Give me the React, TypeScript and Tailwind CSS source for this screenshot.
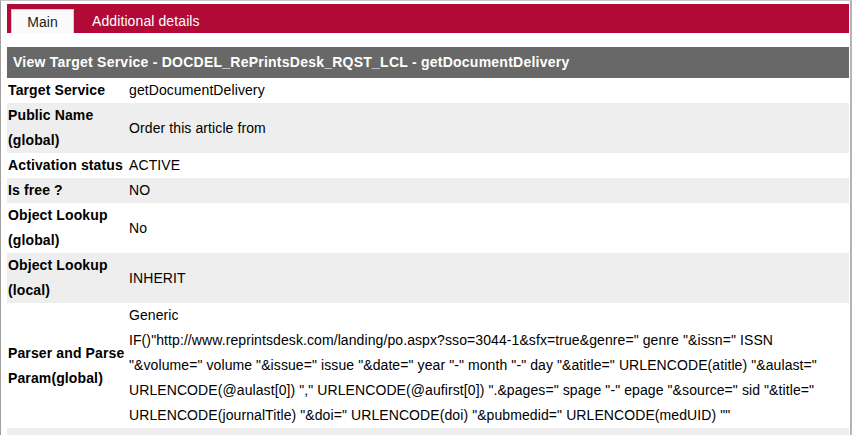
import React from "react";

const rows: { label: string[]; value: React.ReactNode; gray: boolean }[] = [
  { label: ["Target Service"], value: "getDocumentDelivery", gray: false },
  { label: ["Public Name", "(global)"], value: "Order this article from", gray: true },
  { label: ["Activation status"], value: "ACTIVE", gray: false },
  { label: ["Is free ?"], value: "NO", gray: true },
  { label: ["Object Lookup", "(global)"], value: "No", gray: false },
  { label: ["Object Lookup", "(local)"], value: "INHERIT", gray: true },
];

const parserLines = [
  "Generic",
  'IF()"http://www.reprintsdesk.com/landing/po.aspx?sso=3044-1&sfx=true&genre=" genre "&issn=" ISSN',
  '"&volume=" volume "&issue=" issue "&date=" year "-" month "-" day "&atitle=" URLENCODE(atitle) "&aulast="',
  'URLENCODE(@aulast[0]) "," URLENCODE(@aufirst[0]) ".&pages=" spage "-" epage "&source=" sid "&title="',
  'URLENCODE(journalTitle) "&doi=" URLENCODE(doi) "&pubmedid=" URLENCODE(medUID) ""',
];

export default function App() {
  return (
    <div
      className="w-[852px] h-[435px] overflow-hidden bg-white border-t border-l border-r-2 border-t-[#c8c8c8] border-l-[#a0a0a0] border-r-[#b4b4b4] pl-[6px] pr-[1px] pt-[3px] text-black text-[14px]"
      style={{ fontFamily: '"Liberation Sans", Arial, sans-serif' }}
    >
      {/* tab bar */}
      <div className="h-[29px] bg-[#b20a37] flex items-end pl-[4px]">
        <div className="h-[24px] w-[63px] bg-[#fafafa] border border-b-0 border-[#d0d0d0] flex items-center justify-center text-[#222] leading-none tracking-[0.1px]">
          Main
        </div>
        <div className="h-[24px] flex items-center pl-[18px] text-white leading-none tracking-[0.1px]">
          Additional details
        </div>
      </div>

      {/* heading */}
      <div className="mt-[14px] h-[31px] bg-[#686868] text-white font-bold flex items-center pl-[6px] tracking-[0.24px]">
        View Target Service - DOCDEL_RePrintsDesk_RQST_LCL - getDocumentDelivery
      </div>

      {/* rows */}
      <div className="leading-[25px]">
        {rows.map((r, i) => (
          <div key={i} className={`flex items-center ${r.gray ? "bg-[#eeeeee]" : "bg-white"}`}>
            <div className="w-[121px] pl-[1px] font-bold shrink-0 tracking-[0.12px]">
              {r.label.map((l, j) => (
                <div key={j}>{l}</div>
              ))}
            </div>
            <div className="pl-[1px] tracking-[0.1px]">{r.value}</div>
          </div>
        ))}
        <div className="flex items-center bg-white">
          <div className="w-[121px] pl-[1px] font-bold shrink-0 tracking-[0.12px]">
            <div>Parser and Parse</div>
            <div>Param(global)</div>
          </div>
          <div className="pl-[1px] tracking-[0.09px]">
            {parserLines.map((l, j) => (
              <div key={j} className="whitespace-nowrap">{l}</div>
            ))}
          </div>
        </div>
        <div className="h-[25px] bg-[#eeeeee]" />
      </div>
    </div>
  );
}
